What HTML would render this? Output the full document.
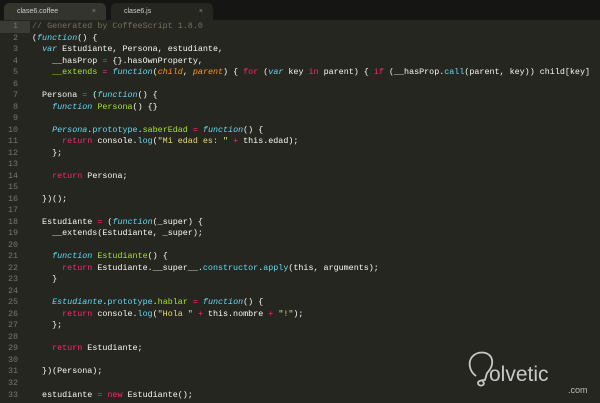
<!DOCTYPE html>
<html><head><meta charset="utf-8"><style>
body{margin:0;width:600px;height:403px;overflow:hidden;background:#252620;font-family:"Liberation Mono",monospace;}
.tabs{position:absolute;left:0;top:0;width:600px;height:20px;background:#151513;}
.tab{position:absolute;top:3px;height:17px;border-radius:5px 5px 0 0;font:7px "Liberation Sans",sans-serif;color:#ccc;line-height:17px;}
.t1{left:4px;width:102px;background:#34342f;}
.t2{left:111px;width:102px;background:#252620;}
.tab span{position:absolute;left:13px}
.tab b{position:absolute;right:10px;font-weight:normal;color:#888}
.gut{position:absolute;left:0;top:21px;width:30px;}
.gut div{height:11.53px;line-height:11.53px;font-size:8.4px;color:#75766f;text-align:right;padding-right:12px;box-sizing:border-box;width:30px}
.hl{background:#3a3b34}
.code{position:absolute;left:32px;top:21px;color:#f8f8f2;font-size:8.4px;}
.code div{height:11.53px;line-height:11.53px;white-space:pre}
.c{color:#75715e}.k{color:#f92672}.f{color:#66d9ef;font-style:italic}.g{color:#a6e22e}.p{color:#fd971f;font-style:italic}.s{color:#e6db74}.b{color:#66d9ef}.i{color:#66d9ef;font-style:italic}
.logo{position:absolute;color:#c8c8c8;font:21px "Liberation Sans",sans-serif;}
.com{position:absolute;left:568px;top:385px;color:#bbb;font:9px "Liberation Sans",sans-serif;}
</style></head><body>
<div class="tabs"><div class="tab t1"><span>clase6.coffee</span><b>×</b></div><div class="tab t2"><span>clase6.js</span><b>×</b></div></div>
<div class="gut"><div class="hl">1</div><div>2</div><div>3</div><div>4</div><div>5</div><div>6</div><div>7</div><div>8</div><div>9</div><div>10</div><div>11</div><div>12</div><div>13</div><div>14</div><div>15</div><div>16</div><div>17</div><div>18</div><div>19</div><div>20</div><div>21</div><div>22</div><div>23</div><div>24</div><div>25</div><div>26</div><div>27</div><div>28</div><div>29</div><div>30</div><div>31</div><div>32</div><div>33</div></div>
<div class="code">
<div><span class="c">// Generated by CoffeeScript 1.8.0</span></div>
<div>(<span class="f">function</span>() {</div>
<div>  <span class="f">var</span> Estudiante, Persona, estudiante,</div>
<div>    __hasProp <span class="k">=</span> {}.hasOwnProperty,</div>
<div>    <span class="g">__extends</span> <span class="k">=</span> <span class="f">function</span>(<span class="p">child</span>, <span class="p">parent</span>) { <span class="k">for</span> (<span class="f">var</span> key <span class="k">in</span> parent) { <span class="k">if</span> (__hasProp.<span class="b">call</span>(parent, key)) child[key]</div>
<div> </div>
<div>  Persona <span class="k">=</span> (<span class="f">function</span>() {</div>
<div>    <span class="f">function</span> <span class="g">Persona</span>() {}</div>
<div> </div>
<div>    <span class="i">Persona</span>.<span class="b">prototype</span>.<span class="g">saberEdad</span> <span class="k">=</span> <span class="f">function</span>() {</div>
<div>      <span class="k">return</span> console.<span class="b">log</span>(<span class="s">"Mi edad es: "</span> <span class="k">+</span> this.edad);</div>
<div>    };</div>
<div> </div>
<div>    <span class="k">return</span> Persona;</div>
<div> </div>
<div>  })();</div>
<div> </div>
<div>  Estudiante <span class="k">=</span> (<span class="f">function</span>(_super) {</div>
<div>    __extends(Estudiante, _super);</div>
<div> </div>
<div>    <span class="f">function</span> <span class="g">Estudiante</span>() {</div>
<div>      <span class="k">return</span> Estudiante.__super__.<span class="b">constructor</span>.<span class="b">apply</span>(this, arguments);</div>
<div>    }</div>
<div> </div>
<div>    <span class="i">Estudiante</span>.<span class="b">prototype</span>.<span class="g">hablar</span> <span class="k">=</span> <span class="f">function</span>() {</div>
<div>      <span class="k">return</span> console.<span class="b">log</span>(<span class="s">"Hola "</span> <span class="k">+</span> this.nombre <span class="k">+</span> <span class="s">"!"</span>);</div>
<div>    };</div>
<div> </div>
<div>    <span class="k">return</span> Estudiante;</div>
<div> </div>
<div>  })(Persona);</div>
<div> </div>
<div>  estudiante <span class="k">=</span> <span class="k">new</span> Estudiante();</div>
</div>
<svg style="position:absolute;left:466px;top:350px" width="32" height="40"><path d="M10 26 C3 21 2 12 6 7 C11 1 21 1 25 7 C28 13 25 19 21 23 L19 30 C14 30 10 32 13 35 C17 37 20 33 16 31" fill="none" stroke="#c8c8c8" stroke-width="1.8"/></svg>
<div class="logo" style="left:489px;top:363px">olvetic</div>
<div class="com">.com</div>
</body></html>
